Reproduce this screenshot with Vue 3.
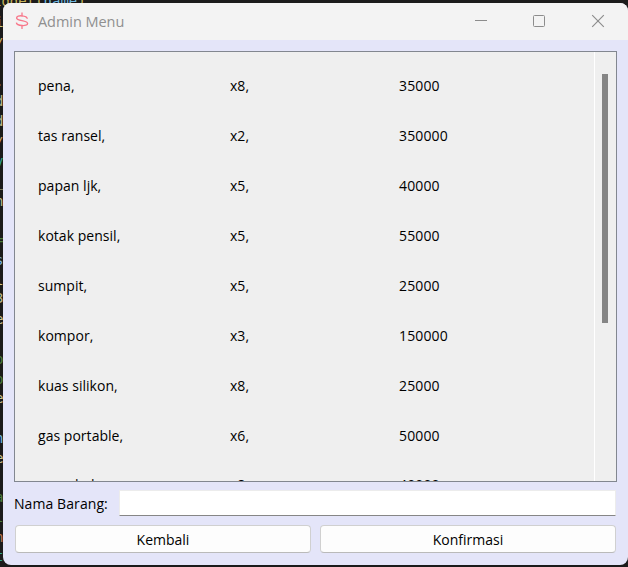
<script setup>
const items = [
  ['pena,', 'x8,', '35000'],
  ['tas ransel,', 'x2,', '350000'],
  ['papan ljk,', 'x5,', '40000'],
  ['kotak pensil,', 'x5,', '55000'],
  ['sumpit,', 'x5,', '25000'],
  ['kompor,', 'x3,', '150000'],
  ['kuas silikon,', 'x8,', '25000'],
  ['gas portable,', 'x6,', '50000'],
  ['mangkuk,', 'x8,', '40000'],
]
// Editor text peeking out beside the window: [character, top, colour]
const code = [
  ['i', 13, '#c8c87a'], ['/', 34, '#c9b06b'],
  ['.', 72, '#d4d4d4'], ['d', 92, '#b8b78a'], ['d', 112, '#b8b78a'],
  ['/', 133, '#c9a06b'], ['v', 152, '#2fa58f'], ['_', 172, '#b8b78a'],
  ['n', 192, '#b8b78a'], ['=', 231, '#4b7d3c'], ['s', 251, '#7cb5dc'],
  ['l', 271, '#d6c985'], ['3', 289, '#b5b58a'], ['e', 310, '#c8c190'],
  ['o', 350, '#4b7d3c'], ['o', 370, '#4b7d3c'], ['e', 389, '#c8c190'],
  ['n', 429, '#6db3dd'], ['e', 449, '#c8c190'], ['a', 488, '#4b7d3c'],
  ['l', 508, '#4b7d3c'], ['n', 528, '#b87450'], ['t', 547, '#2fa58f'],
]
</script>

<template>
  <main class="desktop">
    <div class="topcode"><span class="y">idget(</span><span class="b">name</span><span class="y">)</span></div>
    <span v-for="(c, i) in code" :key="i" class="code" :style="{ top: c[1] + 'px', color: c[2] }">{{ c[0] }}</span>
    <section class="window">
      <header class="titlebar">
        <svg class="logo" width="14" height="18" viewBox="0 0 14 18" fill="none" stroke="#f8788b" stroke-width="1.4">
          <path d="M7 .5v4M7 13v4" stroke-width="1.3" />
          <path d="M12.3 6.8C12 3.4 1.6 2.6 1.6 6C1.6 9.2 12.6 8 12.6 11.4C12.6 14.8 1.8 14 1.4 10.6" />
        </svg>
        <h1>Admin Menu</h1>
        <svg class="controls" width="134" height="14" viewBox="0 0 134 14" fill="none" stroke="#8c8c8c" stroke-width="1">
          <path d="M0 6.5h12" />
          <rect x="58.5" y="1.5" width="11" height="11" rx="1" />
          <path d="M117.2 1.2l11.6 11.6M128.8 1.2l-11.6 11.6" stroke-width="1.15" />
        </svg>
      </header>
      <div class="body">
        <div class="scroll">
          <div class="list">
            <div v-for="r in items" :key="r[0]" class="row">
              <span>{{ r[0] }}</span>
              <span>{{ r[1] }}</span>
              <span class="price">{{ r[2] }}</span>
            </div>
          </div>
          <div class="track"><div class="thumb"></div></div>
        </div>
        <div class="field">
          <label for="nama">Nama Barang:</label>
          <input id="nama" type="text" />
        </div>
        <div class="actions">
          <button>Kembali</button>
          <button>Konfirmasi</button>
        </div>
      </div>
    </section>
  </main>
</template>

<style>
body { margin: 0; overflow: hidden; }
</style>
<style scoped>
* { box-sizing: border-box; }
.desktop {
  position: relative;
  width: 628px;
  height: 567px;
  padding: 3px 0 2px 3px;
  overflow: hidden;
  background: #1b1b1b;
  font: 14px/20px "Open Sans", "Noto Sans", sans-serif;
  color: #000;
}
.topcode, .code {
  position: absolute;
  font: 14px/18px "DejaVu Sans Mono", monospace;
  white-space: pre;
}
.topcode { left: -7px; top: -8px; }
.y { color: #c6b45c; }
.b { color: #70b7df; }
.code { left: -5px; }
.window {
  position: relative;
  display: flex;
  flex-direction: column;
  width: 625px;
  height: 562px;
  border-radius: 8px;
  overflow: hidden;
  background: #e4e5f9;
}
.titlebar {
  display: flex;
  align-items: center;
  height: 37px;
  padding: 0 19px 2px 12px;
  background: #f3f3f3;
}
h1 {
  margin: 2px 0 0 9px;
  font-size: 14.5px;
  font-weight: 400;
  letter-spacing: -0.05px;
  color: #8f8f8f;
}
.controls { margin-left: auto; }
.body { display: flex; flex-direction: column; padding: 11px 11px 0; }
.scroll {
  display: flex;
  height: 431px;
  border: 1px solid #828790;
  background: #efefef;
  overflow: hidden;
}
.list { flex: 1; padding: 9px 0 0 23px; }
.row {
  display: grid;
  grid-template-columns: 192px 169px 1fr;
  align-items: center;
  height: 50px;
  letter-spacing: 0.03px;
}
.row:last-child { height: 48px; }
.price { letter-spacing: 0.13px; }
.track { width: 22px; padding: 22px 0 0 7px; border-left: 1px solid #fff; }
.thumb { width: 6px; height: 249px; background: #858585; }
.field { display: flex; align-items: center; height: 26px; margin-top: 8px; padding-right: 1px; }
label { width: 105px; padding-top: 2px; letter-spacing: 0.08px; }
input {
  flex: 1;
  height: 26px;
  padding: 0 6px;
  border: 1px solid #ececec;
  border-bottom-color: #868686;
  border-radius: 1px;
  background: #fff;
  outline: none;
}
.actions { display: flex; gap: 9px; padding: 9px 1px 0 1px; }
button {
  flex: 1;
  height: 28px;
  padding: 1px 0 0;
  border: 1px solid #d0d0d0;
  border-bottom-color: #bababa;
  border-radius: 4px;
  background: #fdfdfd;
  color: #000;
  font: inherit;
}
</style>
